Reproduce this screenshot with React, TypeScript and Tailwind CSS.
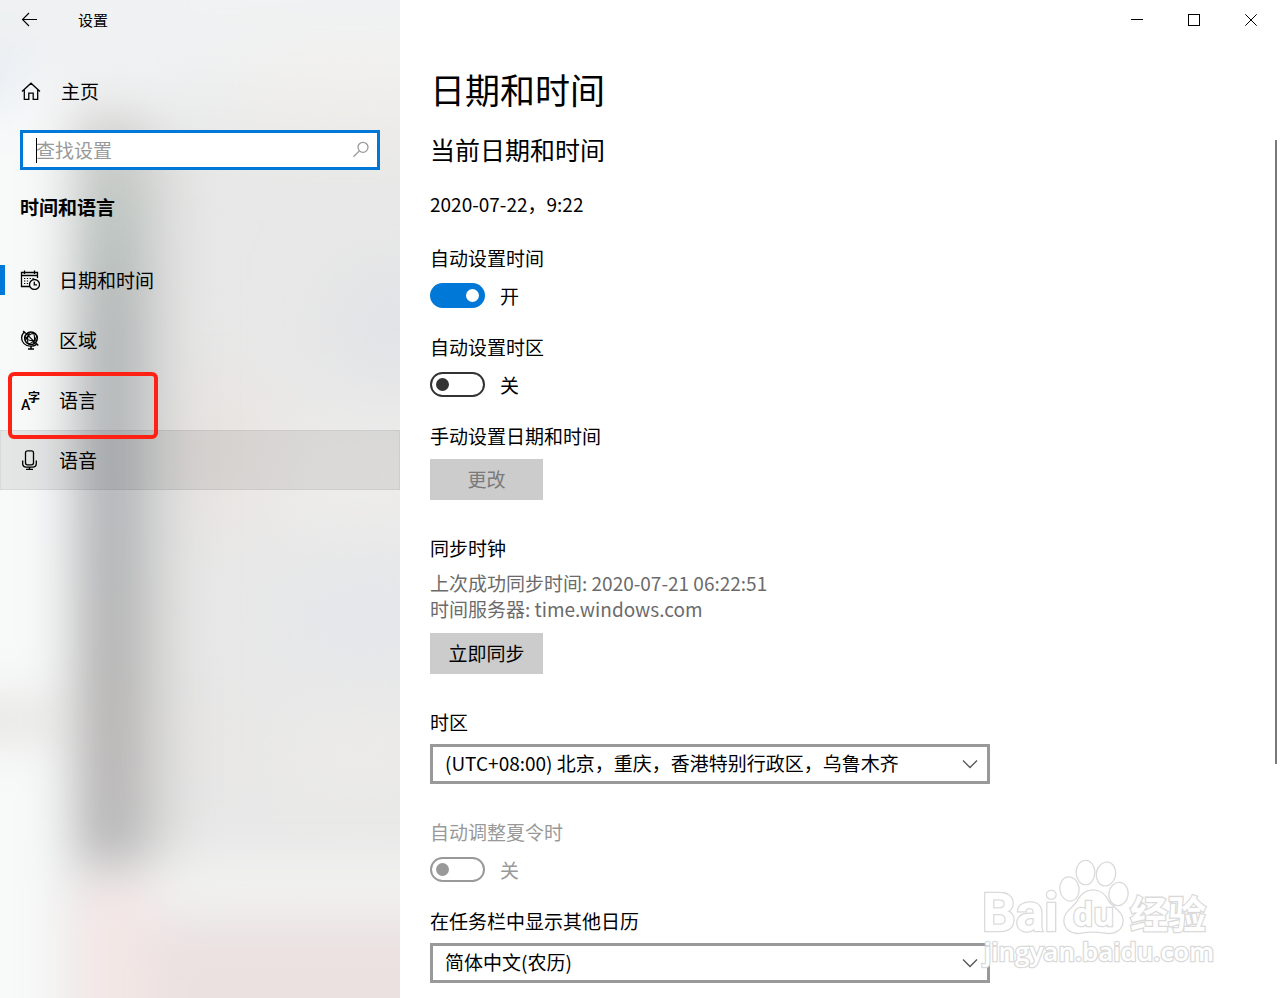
import { useState, type ReactNode } from "react";

interface IconProps {
  className?: string;
}

function Icon({ className, children }: IconProps & { children: ReactNode }) {
  return (
    <svg
      viewBox="0 0 20 20"
      fill="none"
      stroke="currentColor"
      strokeWidth="1.3"
      aria-hidden="true"
      className={`size-5 shrink-0 ${className ?? ""}`}
    >
      {children}
    </svg>
  );
}

function BackIcon() {
  return (
    <Icon>
      <path d="M17 9.5H2.5M9 3L2.5 9.5L9 16" strokeWidth="1.1" />
    </Icon>
  );
}

function HomeIcon() {
  return (
    <Icon>
      <path d="M1 10.5L10 2.2L19 10.5M3.3 8.8V18.3H7.8V12.2H12.2V18.3H16.7V8.8" />
    </Icon>
  );
}

function CalendarClockIcon() {
  return (
    <Icon>
      <path d="M10 16.5H1.5V2.5H17.5V8M1.5 5.5H17.5M4.5 0.5V4M14.5 0.5V4" />
      <path
        d="M4 8.5H5.3M6.8 8.5H8.1M9.6 8.5H10.9M12.4 8.5H13.7M4 11H5.3M6.8 11H8.1M4 13.5H5.3M6.8 13.5H8.1"
        strokeWidth="1.2"
      />
      <circle cx="14.5" cy="14.5" r="5" />
      <path d="M14.3 11.7V14.8H17" />
    </Icon>
  );
}

function GlobeIcon() {
  return (
    <Icon>
      <circle cx="11" cy="8.3" r="6.3" strokeWidth="1.5" />
      <path d="M3.2 1L5.7 3.6M15.8 13L18.3 15.5" strokeWidth="1.5" />
      <path d="M4 2.2C0.8 5.5 0.8 10.5 4 13.6C7.3 16.7 13 17 16.6 14.4" />
      <path
        d="M6.5 3.9L15.4 12.8M5.3 10.5C6 7 9.5 3.6 14 3.4M8 13.8C12 13.5 15.8 10 16.6 6M9.5 2.4C7.8 5.5 7.2 9.5 8 13.8M5 7C8 10.5 12.5 11.5 16.8 10M13.5 2.6C14.8 5.8 14.8 10 13.5 13.8"
        strokeWidth="1.1"
      />
      <path d="M11 16V18.6M8 19H14" strokeWidth="1.5" />
    </Icon>
  );
}

function LanguageIcon() {
  return (
    <svg viewBox="0 0 20 20" fill="currentColor" aria-hidden="true" className="size-5 shrink-0 overflow-visible">
      <text x="1" y="20" fontSize="14" className="font-[Roboto,sans-serif] font-medium">A</text>
      <text x="8" y="12" fontSize="12" className="font-['Noto_Sans_CJK_SC',sans-serif] font-bold">字</text>
    </svg>
  );
}

function MicIcon() {
  return (
    <Icon>
      <rect x="5.5" y="0.8" width="8" height="14" rx="2" />
      <path d="M2.7 10.5V13.5C2.7 15.8 4.3 17.2 6.5 17.2H12.5C14.7 17.2 16.3 15.8 16.3 13.5V10.5M9.5 17.2V19.5M6 19.4H13" />
    </Icon>
  );
}

// Blurred desktop showing through the navigation pane
function AcrylicBackdrop() {
  return (
    <svg
      viewBox="0 0 400 998"
      preserveAspectRatio="none"
      aria-hidden="true"
      className="absolute inset-0 -z-10 size-full"
    >
      <defs>
        <filter id="soft" x="-100%" y="-100%" width="300%" height="300%">
          <feGaussianBlur stdDeviation="24" />
        </filter>
        <filter id="wide" x="-100%" y="-100%" width="300%" height="300%">
          <feGaussianBlur stdDeviation="42" />
        </filter>
        <linearGradient id="band" x1="0" y1="0" x2="0" y2="1">
          <stop offset="0" stopColor="#d4d0ce" />
          <stop offset="0.13" stopColor="#bac4c0" />
          <stop offset="0.26" stopColor="#b4b8b8" />
          <stop offset="0.5" stopColor="#b3b6b9" />
          <stop offset="0.8" stopColor="#b7b5b4" />
          <stop offset="1" stopColor="#b9b8b9" />
        </linearGradient>
      </defs>
      <rect width="400" height="998" fill="#e8e8e8" />
      <g filter="url(#wide)">
        <rect x="-100" y="-100" width="600" height="200" fill="#f0f2f3" />
        <rect x="250" y="60" width="200" height="60" fill="#f3f0eb" />
        <rect x="340" y="280" width="120" height="90" fill="#dfe1e5" />
        <rect x="175" y="390" width="80" height="120" fill="#e9e0db" />
        <rect x="260" y="430" width="200" height="90" fill="#efeeec" />
        <rect x="290" y="570" width="150" height="100" fill="#e4e6ea" />
        <rect x="170" y="710" width="50" height="60" fill="#e8e1df" />
        <rect x="280" y="700" width="160" height="100" fill="#ecebe9" />
      </g>
      <g filter="url(#soft)">
        <rect x="-60" y="-60" width="120" height="1120" fill="#f8f9f9" />
        <rect x="-60" y="-60" width="240" height="140" fill="#eff1f2" />
        <rect x="-60" y="50" width="80" height="60" fill="#e7eef5" />
        <rect x="-60" y="695" width="110" height="50" fill="#e7e7e4" />
        <rect x="140" y="150" width="44" height="710" fill="#dbdbda" />
        <rect x="76" y="120" width="70" height="745" fill="url(#band)" />
        <rect x="150" y="860" width="340" height="50" fill="#f3f3f2" />
        <rect x="75" y="885" width="80" height="180" fill="#f4e7e6" />
        <rect x="145" y="925" width="320" height="130" fill="#ece1e1" />
      </g>
    </svg>
  );
}

const navItems = [
  { label: "日期和时间", icon: <CalendarClockIcon />, active: true },
  { label: "区域", icon: <GlobeIcon /> },
  { label: "语言", icon: <LanguageIcon />, marked: true },
  { label: "语音", icon: <MicIcon />, hovered: true },
];

function Sidebar() {
  return (
    <aside className="relative isolate w-[400px] shrink-0 overflow-hidden">
      <AcrylicBackdrop />
      <header className="flex h-10 items-center gap-[38px] px-5">
        <button type="button" aria-label="返回">
          <BackIcon />
        </button>
        <span className="text-[15px]">设置</span>
      </header>

      <a href="#home" className="mt-[21px] flex h-[60px] items-center gap-5 px-[21px]">
        <HomeIcon />
        <span>主页</span>
      </a>

      <label className="relative mx-5 mt-[9px] flex h-10 items-center border-3 border-[#0078d7] bg-white">
        <input
          type="text"
          aria-label="查找设置"
          placeholder="查找设置"
          className="h-full w-full bg-transparent px-[13px] pb-0.5 outline-none placeholder:text-[#999]"
        />
        <span className="absolute left-[13px] h-[25px] w-px bg-black" />
        <Icon className="absolute right-1.5 text-[#999]">
          <circle cx="12" cy="7.3" r="5" />
          <path d="M8.4 10.9L2.5 16.8" />
        </Icon>
      </label>

      <h2 className="flex h-20 items-center px-5 pb-1.5 font-bold">时间和语言</h2>

      <nav>
        {navItems.map((item) => (
          <a
            key={item.label}
            href="#"
            className={`relative flex h-[60px] items-center gap-[19px] px-5 ${
              item.hovered ? "bg-black/8 inset-ring inset-ring-black/5" : ""
            }`}
          >
            {item.active && <span className="absolute left-0 h-[30px] w-[5px] bg-[#0078d7]" />}
            {item.icon}
            <span>{item.label}</span>
            {item.marked && (
              <span className="absolute top-0.5 left-2 z-10 h-[67px] w-[150px] rounded-md border-4 border-[#ff2114]" />
            )}
          </a>
        ))}
      </nav>
    </aside>
  );
}

interface ToggleProps {
  id: string;
  label: string;
  initial?: boolean;
  disabled?: boolean;
}

function Toggle({ id, label, initial = false, disabled }: ToggleProps) {
  const [on, setOn] = useState(initial);

  return (
    <div className={`mb-[26px] ${disabled ? "text-[#999]" : ""}`}>
      <label htmlFor={id} className="block">
        {label}
      </label>
      <div className="mt-3 flex h-[25px] items-center gap-[15px]">
        <input
          id={id}
          type="checkbox"
          role="switch"
          checked={on}
          disabled={disabled}
          onChange={(e) => setOn(e.target.checked)}
          className="flex h-[25px] w-[55px] appearance-none items-center rounded-full border-2 border-[#333] px-1 before:size-[13px] before:rounded-full before:bg-[#333] checked:justify-end checked:border-[#0078d7] checked:bg-[#0078d7] checked:before:bg-white disabled:border-[#999] disabled:before:bg-[#999]"
        />
        <span>{on ? "开" : "关"}</span>
      </div>
    </div>
  );
}

function SelectField({ id, label, options }: { id: string; label: string; options: string[] }) {
  return (
    <div>
      <label htmlFor={id} className="block">
        {label}
      </label>
      <div className="relative mt-[9px] flex max-w-[560px] items-center">
        <select
          id={id}
          className="h-10 w-full appearance-none border-3 border-[#999] bg-white px-3 pb-0.5 outline-none"
        >
          {options.map((o) => (
            <option key={o}>{o}</option>
          ))}
        </select>
        <Icon className="pointer-events-none absolute right-[10px] text-[#555]">
          <path d="M3 6.5L10 13.5L17 6.5" />
        </Icon>
      </div>
    </div>
  );
}

function WindowControls() {
  return (
    <div className="flex h-10 justify-end pr-px">
      <button type="button" aria-label="最小化" className="flex w-[57px] items-center justify-center">
        <svg viewBox="0 0 12 12" className="size-3" stroke="black" fill="none">
          <path d="M0 5.5H12" />
        </svg>
      </button>
      <button type="button" aria-label="最大化" className="flex w-[57px] items-center justify-center">
        <svg viewBox="0 0 12 12" className="size-3" stroke="black" fill="none">
          <rect x="0.5" y="0.5" width="11" height="11" />
        </svg>
      </button>
      <button type="button" aria-label="关闭" className="flex w-[57px] items-center justify-center">
        <svg viewBox="0 0 12 12" className="size-3" stroke="black" fill="none">
          <path d="M0.3 0.3L11.7 11.7M11.7 0.3L0.3 11.7" />
        </svg>
      </button>
    </div>
  );
}

function Watermark() {
  return (
    <svg
      viewBox="0 0 240 120"
      aria-hidden="true"
      className="pointer-events-none absolute right-20 bottom-7 h-[120px] w-[240px] overflow-visible [paint-order:stroke]"
      fill="white"
      stroke="#dadada"
      strokeWidth="2.6"
    >
      <ellipse cx="109.5" cy="39" rx="9" ry="11.5" transform="rotate(-8 109.5 39)" />
      <ellipse cx="125.5" cy="22.5" rx="8.7" ry="11.5" />
      <ellipse cx="146" cy="24" rx="9" ry="11.3" transform="rotate(10 146 24)" />
      <ellipse cx="158.5" cy="44" rx="9" ry="11" transform="rotate(8 158.5 44)" />
      <path d="M133 40.5C141 40.5 145 45 148 51C152 58 163 62 162.5 71C162 81 153 84 145 82.5C137 81 129 81 121 82.5C113 84 105 80 104.5 71C104 62 114 58 118 51C121 45 126 40.5 133 40.5Z" />
      <text x="22" y="81" fontSize="53" className="font-[Roboto,sans-serif] font-bold">Bai</text>
      <text x="113" y="76" fontSize="32" className="font-['Open_Sans',sans-serif] font-bold">du</text>
      <text x="170" y="78" fontSize="38" className="font-['Noto_Sans_CJK_SC',sans-serif] font-bold">经验</text>
      <text x="24" y="111" fontSize="26" className="font-['Open_Sans',sans-serif] font-semibold">
        jingyan.baidu.com
      </text>
    </svg>
  );
}

export default function App() {
  return (
    <div className="flex min-h-screen bg-white font-['Noto_Sans_CJK_SC',sans-serif] text-[19px] leading-[26px] text-black">
      <Sidebar />

      <main className="relative min-w-0 flex-1 overflow-hidden">
        <WindowControls />

        <div className="px-[30px] pt-[26px] pb-[15px]">
          <h1 className="text-[35px] leading-[46px]">日期和时间</h1>
          <h2 className="mt-5 text-[25px] leading-[34px]">当前日期和时间</h2>
          <p className="mt-[25px] mb-7">2020-07-22，9:22</p>

          <Toggle id="auto-time" label="自动设置时间" initial />
          <Toggle id="auto-zone" label="自动设置时区" />

          <section className="mb-[35px]">
            <h3>手动设置日期和时间</h3>
            <button type="button" disabled className="mt-[10px] h-[41px] w-[113px] bg-[#ccc] pb-0.5 text-[#7a7a7a]">
              更改
            </button>
          </section>

          <section className="mb-[35px]">
            <h3>同步时钟</h3>
            <div className="mt-[9px] text-[#6b6b6b]">
              <p>上次成功同步时间: 2020-07-21 06:22:51</p>
              <p>时间服务器: time.windows.com</p>
            </div>
            <button type="button" className="mt-[11px] h-[41px] w-[113px] bg-[#ccc] pb-0.5">
              立即同步
            </button>
          </section>

          <div className="mb-[35px]">
            <SelectField
              id="zone"
              label="时区"
              options={["(UTC+08:00) 北京，重庆，香港特别行政区，乌鲁木齐"]}
            />
          </div>

          <Toggle id="dst" label="自动调整夏令时" disabled />

          <SelectField id="calendar" label="在任务栏中显示其他日历" options={["简体中文(农历)"]} />
        </div>

        <span className="absolute top-[140px] right-[3px] h-[62.5%] w-0.5 bg-[#7a7a7a]" />
        <Watermark />
      </main>
    </div>
  );
}
